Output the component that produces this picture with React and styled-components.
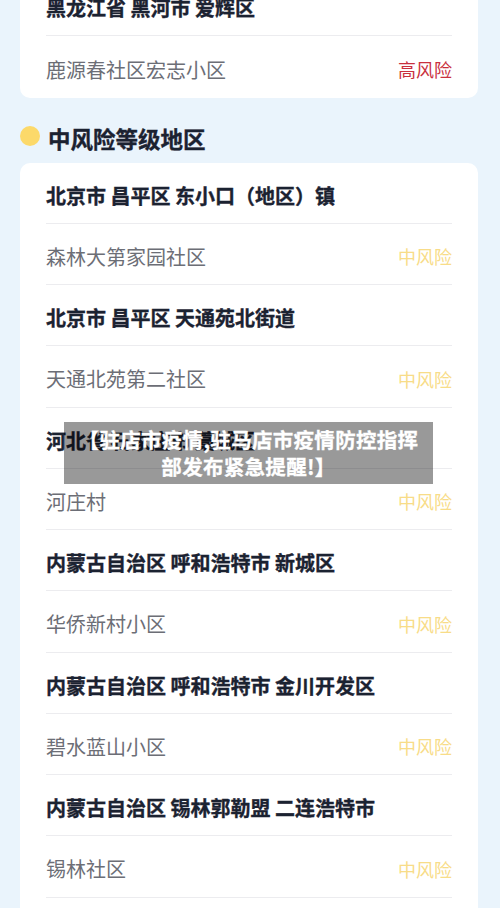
import React from "react";
import styled, { createGlobalStyle } from "styled-components";

const GlobalStyle = createGlobalStyle`
  html, body {
    margin: 0;
    padding: 0;
    background: #eaf4fc;
    font-family: "Noto Sans CJK SC", "Noto Sans", sans-serif;
  }
`;

const high = [
  {
    region: "黑龙江省 黑河市 爱辉区",
    places: [{ name: "鹿源春社区宏志小区", level: "high" }],
  },
];

const medium = [
  {
    region: "北京市 昌平区 东小口（地区）镇",
    places: [{ name: "森林大第家园社区", level: "medium" }],
  },
  {
    region: "北京市 昌平区 天通苑北街道",
    places: [{ name: "天通北苑第二社区", level: "medium" }],
  },
  {
    region: "河北省 石家庄市 藁城区",
    places: [{ name: "河庄村", level: "medium" }],
  },
  {
    region: "内蒙古自治区 呼和浩特市 新城区",
    places: [{ name: "华侨新村小区", level: "medium" }],
  },
  {
    region: "内蒙古自治区 呼和浩特市 金川开发区",
    places: [{ name: "碧水蓝山小区", level: "medium" }],
  },
  {
    region: "内蒙古自治区 锡林郭勒盟 二连浩特市",
    places: [{ name: "锡林社区", level: "medium" }],
  },
];

const levelText = { high: "高风险", medium: "中风险" };

const RiskCard = ({ groups, more }) => (
  <Card $more={more}>
    {groups.map((g) => (
      <React.Fragment key={g.region}>
        <Row>
          <Region>{g.region}</Region>
        </Row>
        {g.places.map((p) => (
          <Row key={p.name}>
            <Place>{p.name}</Place>
            <Level $level={p.level}>{levelText[p.level]}</Level>
          </Row>
        ))}
      </React.Fragment>
    ))}
  </Card>
);

const App = () => (
  <>
    <GlobalStyle />
    <Viewport>
      <Page>
        <RiskCard groups={high} />
        <SectionTitle>
          <Dot />
          中风险等级地区
        </SectionTitle>
        <RiskCard groups={medium} more />
      </Page>
    </Viewport>
    <Banner>
      【驻店市疫情,驻马店市疫情防控指挥
      <br />
      部发布紧急提醒!】
    </Banner>
  </>
);

const Viewport = styled.div`
  width: 500px;
  height: 908px;
  overflow: hidden;
`;

const Page = styled.div`
  margin-top: -25px;
  padding: 0 22px 0 20px;
`;

const Row = styled.div`
  height: 61.25px;
  box-sizing: border-box;
  padding-top: 5px;
  display: flex;
  align-items: center;
  justify-content: space-between;
  border-bottom: 1px solid #ececef;
`;

const Card = styled.div`
  background: #ffffff;
  border-radius: 10px;
  padding: 0 26px ${(p) => (p.$more ? "40px" : "0")};

  & > ${Row}:last-child {
    border-bottom: ${(p) => (p.$more ? "1px solid #ececef" : "none")};
  }
`;

const Region = styled.span`
  font-size: 20px;
  font-weight: 700;
  color: #1b2231;
  white-space: nowrap;
  -webkit-text-stroke: 0.35px #1b2231;
`;

const Place = styled.span`
  font-size: 20px;
  color: #6c6e76;
`;

const Level = styled.span`
  font-size: 18px;
  color: ${(p) => (p.$level === "high" ? "#c9303e" : "#f8dc88")};
`;

const SectionTitle = styled.div`
  display: flex;
  align-items: center;
  gap: 8px;
  padding: 27px 0 12px;
  height: 26px;
  font-size: 22.5px;
  font-weight: 700;
  color: #1b2231;
  line-height: 26px;
  -webkit-text-stroke: 0.35px #1b2231;
`;

const Dot = styled.span`
  width: 20px;
  height: 20px;
  border-radius: 50%;
  background: #fcd96a;
  margin-top: -4px;
`;

const Banner = styled.div`
  position: absolute;
  left: 64px;
  top: 422px;
  width: 369px;
  height: 62px;
  box-sizing: border-box;
  padding-top: 4px;
  background: rgba(0, 0, 0, 0.4);
  color: #ffffff;
  font-size: 20.5px;
  font-weight: 700;
  line-height: 27px;
  text-align: center;
  letter-spacing: 0.3px;
  -webkit-text-stroke: 0.3px #ffffff;
`;

export default App;
